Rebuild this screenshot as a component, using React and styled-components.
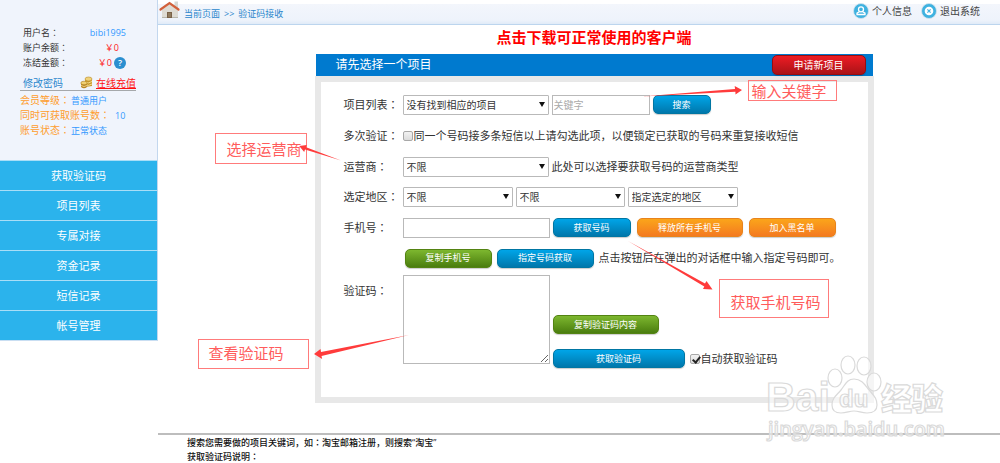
import React from "react";
import styled, { createGlobalStyle, css } from "styled-components";

const GlobalStyle = createGlobalStyle`
  * { box-sizing: border-box; }
  body { margin: 0; background: #fff; }
  body, button, input, select, textarea {
    font-family: "Open Sans", "Noto Sans CJK SC", sans-serif;
  }
`;

const Page = styled.div`
  display: flex;
  align-items: flex-start;
  min-height: 100vh;
  overflow-x: hidden;
  color: #333;
  font-size: 11px;
  line-height: 16px;
`;

/* full-width colon with its dots in the middle of the em box */
const CenteredColon = styled.span`
  font-family: "Noto Sans CJK JP", sans-serif;
  line-height: 0;
`;

/* ---------- sidebar ---------- */

const Sidebar = styled.aside`
  flex: none;
  width: 158px;
  border-right: 1px solid #c3d7ee;
  border-bottom: 1px solid #c9def2;
`;

const Profile = styled.section`
  min-height: 160px;
  padding: 25px 21px 0 20px;
  background: #f0f4fc;
  font-size: 9px;
  line-height: 15px;
`;

const ProfileRow = styled.div`
  display: flex;
  align-items: center;
  justify-content: space-between;
  height: 15px;
  padding: 0 ${(p) => p.$inset || 10}px 0 3px;
`;

const Value = styled.span`
  display: inline-flex;
  align-items: center;
  gap: 2px;
  color: ${(p) => (p.$money ? "#ff1a1a" : "#3399ff")};
`;

const Help = styled.button`
  width: 12px;
  height: 12px;
  padding: 0;
  border: 0;
  border-radius: 50%;
  background: #2b8fd0;
  color: #fff;
  font-size: 9px;
  font-weight: 600;
  line-height: 12px;
`;

const AccountLinks = styled.div`
  display: flex;
  align-items: flex-end;
  justify-content: space-between;
  height: 21px;
  padding-left: 3px;
  border-bottom: 1px solid #a5a8ab;
  font-size: 10px;
  line-height: 14px;
`;

const AccountLink = styled.a`
  color: ${(p) => (p.$pay ? "#f11" : "#2a86cc")};
  text-decoration: ${(p) => (p.$pay ? "underline" : "none")};
`;

const Recharge = styled.span`
  display: flex;
  align-items: flex-end;
  gap: 3px;
`;

const Status = styled.div`
  padding-top: 2px;
  color: #ff9d2e;
  font-size: 10px;
`;

const StatusValue = styled.span`
  padding-left: ${(p) => (p.$spaced ? 5 : 1)}px;
  color: #3399ff;
  font-size: 9px;
`;

const Nav = styled.nav`
  display: flex;
  flex-direction: column;
`;

const NavLink = styled.a`
  height: 30px;
  border-top: 1px solid #a9def7;
  background: #2bb3ec;
  color: #fff;
  line-height: 29px;
  text-align: center;
  text-decoration: none;
`;

/* ---------- main column ---------- */

const Main = styled.main`
  position: relative;
  flex: 1;
  min-width: 0;
`;

const TopBar = styled.header`
  display: flex;
  align-items: flex-start;
  height: 25px;
  border-bottom: 1px solid #bcd5ee;
  background: linear-gradient(#fff 4px, #f3f6fc 4px, #eef3fb 20px, #dde9f7 25px);
`;

const Crumbs = styled.nav`
  display: flex;
  gap: 4px;
  flex: 1;
  padding: 6px 0 0 3px;
  color: #2a86cc;
  font-size: 9px;
`;

const CrumbLink = styled.a`
  color: inherit;
  text-decoration: none;
`;

const UserLinks = styled.div`
  display: flex;
  gap: 9px;
  padding: 3px 20px 0 0;
`;

const UserLink = styled.a`
  display: flex;
  align-items: center;
  gap: 3px;
  color: #444;
  font-size: 10px;
  text-decoration: none;
`;

const Workspace = styled.div`
  padding: 0 0 30px 30px;
`;

const Download = styled.a`
  display: block;
  padding: 2px 0 7px;
  color: #f00;
  font-size: 15px;
  font-weight: 700;
  line-height: 20px;
  text-align: center;
  text-decoration: none;
`;

const Panel = styled.section`
  position: relative;
  width: 100%;
  max-width: 559px;
  margin: 0 auto;
`;

const PanelHead = styled.div`
  display: flex;
  align-items: center;
  justify-content: space-between;
  height: 22px;
  margin: 0 1px;
  padding: 0 7px 0 20px;
  background: #007acf;
`;

const PanelTitle = styled.h1`
  margin: 0;
  color: #fff;
  font-size: 12px;
  font-weight: 400;
`;

const Form = styled.form`
  min-height: 327px;
  padding: 7px 0 0 23px;
  border: 6px solid #e8e8e8;
`;

const Row = styled.div`
  display: flex;
  align-items: ${(p) => (p.$top ? "flex-start" : "center")};
  min-height: ${(p) => (p.$tight ? 30 : 31)}px;
  padding-top: ${(p) => (p.$top ? 2 : 0)}px;
`;

const Caption = styled.label`
  flex: none;
  width: 59px;
  padding-top: ${(p) => (p.$low ? 8 : 0)}px;
`;

const Controls = styled.div`
  display: flex;
  align-items: ${(p) => (p.$bottom ? "flex-end" : "center")};
  gap: 3px;
  padding-left: ${(p) => (p.$indent ? 2 : 0)}px;
  white-space: nowrap;
`;

const ButtonGroup = styled.div`
  display: flex;
  align-items: center;
  gap: ${(p) => (p.$close ? 5 : 6)}px;
`;

const ButtonStack = styled.div`
  display: flex;
  flex-direction: column;
  gap: 15px;
  margin-bottom: -4px;
`;

const tones = {
  blue: ["#00a5e8", "#0077ab", "#0076a3"],
  orange: ["#fba51a", "#f47a20", "#e8831c"],
  green: ["#7db72f", "#4a7d0e", "#538312"],
  red: ["#ed1c24", "#aa1317", "#980c10"],
};

const Button = styled.button`
  width: ${(p) => p.$width}px;
  height: ${(p) => (p.$tone === "red" ? 20 : 19)}px;
  padding: 0;
  border: 1px solid ${(p) => tones[p.$tone][2]};
  border-radius: 5px;
  background: linear-gradient(${(p) => tones[p.$tone][0]}, ${(p) => tones[p.$tone][1]});
  box-shadow: 0 1px 1px rgba(0, 0, 0, 0.2);
  color: #fff;
  font-size: ${(p) => (p.$tone === "red" ? 10 : 9)}px;
  line-height: 16px;
`;

const boxed = css`
  margin: 0;
  border: 1px solid #b9b9b9;
  border-radius: 0;
  background: #fff;
  color: #333;
  font-size: 10px;
`;

const SelectBox = styled.span`
  position: relative;
  width: ${(p) => p.$width}px;

  &::after {
    content: "";
    position: absolute;
    top: 7px;
    right: 4px;
    border: 3px solid transparent;
    border-top: 5px solid #111;
    border-bottom: 0;
    pointer-events: none;
  }
`;

const Select = styled.select`
  ${boxed}
  display: block;
  width: 100%;
  height: 20px;
  padding: 0 14px 0 3px;
  border-radius: 1px;
  appearance: none;
  line-height: 18px;
`;

const TextInput = styled.input`
  ${boxed}
  width: ${(p) => p.$width}px;
  height: 20px;
  padding: 0 1px;

  &::placeholder { color: #aaa; }
`;

const TextArea = styled.textarea`
  ${boxed}
  width: 147px;
  height: 89px;
  padding: 2px;
`;

const CheckLabel = styled.label`
  display: flex;
  align-items: center;
  gap: 1px;
`;

const Checkbox = styled.input`
  position: relative;
  width: 10px;
  height: 10px;
  margin: 0;
  border: 1px solid #a8a8a8;
  border-radius: 2px;
  appearance: none;
  background: linear-gradient(#f2f2f2, #dcdcdc);

  &:checked::after {
    content: "";
    position: absolute;
    left: 3px;
    top: 0;
    width: 3px;
    height: 6px;
    border: solid #222;
    border-width: 0 2px 2px 0;
    transform: rotate(40deg);
  }
`;

const AutoFetch = styled.div`
  display: flex;
  gap: 5px;
`;

/* ---------- callouts over the panel ---------- */

const Callout = styled.div`
  position: absolute;
  left: ${(p) => p.$x}px;
  top: ${(p) => p.$y}px;
  width: ${(p) => p.$w}px;
  height: ${(p) => p.$h}px;
  padding: ${(p) => p.$pad};
  border: 1px solid #ff7b7b;
  color: #ff5c5c;
  font-size: 15px;
  line-height: 20px;
  white-space: nowrap;
`;

const Arrows = styled.svg`
  position: absolute;
  left: -20px;
  top: 0;
  pointer-events: none;
`;

const Watermark = styled.svg`
  position: absolute;
  right: 50px;
  top: 350px;
  pointer-events: none;
`;

const Notes = styled.footer`
  padding: 1px 0 0 29px;
  border-top: 2px solid #bdbdbd;
  color: #111;
  font-size: 9px;
  font-weight: 500;
  line-height: 14px;
`;

const Note = styled.p`
  margin: 0;
`;

const HouseIcon = () => (
  <svg width="23" height="20" viewBox="0 0 23 20" aria-hidden="true">
    <path d="M16.500 1.500h3.500V9l-3.500-3z" fill="#d6d8d4" />
    <path d="M4 10 11.500 4 20 10v8H4z" fill="#dedbd3" />
    <path d="M4 17h16v1H4z" fill="#b7b5aa" />
    <path d="M2.500 9.500 11.500 3.200 20.500 9.500" fill="none" stroke="#d2603a" strokeWidth="2.200" strokeLinecap="round" />
    <path d="M9 18v-6h5v6z" fill="#7a6248" />
    <path d="M10 13h3v4h-3z" fill="#8f7a5e" />
  </svg>
);

const CoinsIcon = () => (
  <svg width="13" height="14" viewBox="0 0 13 14" aria-hidden="true">
    <path d="M5 3v8l7-1V3z" fill="#c99a2c" />
    <ellipse cx="8.500" cy="3" rx="3.500" ry="2" fill="#f0d27a" stroke="#b98a25" strokeWidth=".6" />
    <path d="M5 6q3.500 2 7-.5M5 8.500q3.500 2 7-.5" fill="none" stroke="#f3dc92" />
    <path d="M1 7v4q3 2.500 6 0V7z" fill="#b98422" />
    <ellipse cx="4" cy="7" rx="3.200" ry="1.800" fill="#f0cf70" stroke="#a97a1c" strokeWidth=".6" />
    <path d="M1 9.500q3 2 6 0" fill="none" stroke="#ecd084" />
  </svg>
);

const UserIcon = () => (
  <svg width="16" height="16" viewBox="0 0 16 16" aria-hidden="true">
    <circle cx="8" cy="8" r="7.500" fill="#3fb2e0" stroke="#d5e3ec" strokeWidth=".8" />
    <circle cx="8" cy="6.300" r="2.500" fill="none" stroke="#fff" strokeWidth="1.300" />
    <path d="M6.600 8.500 4 10.200v1.300h8v-1.300L9.400 8.500" fill="none" stroke="#fff" strokeWidth="1.300" />
  </svg>
);

const ExitIcon = () => (
  <svg width="16" height="16" viewBox="0 0 16 16" aria-hidden="true">
    <circle cx="8" cy="8" r="7.500" fill="#3fb2e0" stroke="#d5e3ec" strokeWidth=".8" />
    <circle cx="8" cy="8" r="4.300" fill="#fff" />
    <path d="m6.400 6.400 3.200 3.200m0-3.200L6.400 9.600" stroke="#3fb2e0" strokeWidth="1.200" />
  </svg>
);

const navItems = ["获取验证码", "项目列表", "专属对接", "资金记录", "短信记录", "帐号管理"];

const Colon = () => <CenteredColon lang="ja">：</CenteredColon>;

const Dropdown = ({ id, label, text, width }) => (
  <SelectBox $width={width}>
    <Select id={id} aria-label={label}>
      <option>{text}</option>
    </Select>
  </SelectBox>
);

const Action = ({ tone = "blue", width, children }) => (
  <Button type="button" $tone={tone} $width={width}>{children}</Button>
);

export default function App() {
  return (
    <Page>
      <GlobalStyle />
      <Sidebar>
        <Profile>
          <ProfileRow><span>用户名<Colon /></span><Value>bibi1995</Value></ProfileRow>
          <ProfileRow $inset={17}><span>账户余额<Colon /></span><Value $money>￥0</Value></ProfileRow>
          <ProfileRow>
            <span>冻结金额<Colon /></span>
            <Value $money>￥0<Help type="button">?</Help></Value>
          </ProfileRow>
          <AccountLinks>
            <AccountLink href="#password">修改密码</AccountLink>
            <Recharge><CoinsIcon /><AccountLink href="#recharge" $pay>在线充值</AccountLink></Recharge>
          </AccountLinks>
          <Status>
            <div>会员等级<Colon /><StatusValue>普通用户</StatusValue></div>
            <div>同时可获取账号数<Colon /><StatusValue $spaced>10</StatusValue></div>
            <div>账号状态<Colon /><StatusValue>正常状态</StatusValue></div>
          </Status>
        </Profile>
        <Nav>
          {navItems.map((item) => <NavLink href="#nav" key={item}>{item}</NavLink>)}
        </Nav>
      </Sidebar>

      <Main>
        <TopBar>
          <HouseIcon />
          <Crumbs>
            <CrumbLink href="#home">当前页面</CrumbLink>
            <span>&gt;&gt;</span>
            <CrumbLink href="#receive">验证码接收</CrumbLink>
          </Crumbs>
          <UserLinks>
            <UserLink href="#me"><UserIcon />个人信息</UserLink>
            <UserLink href="#exit"><ExitIcon />退出系统</UserLink>
          </UserLinks>
        </TopBar>

        <Workspace>
          <Download href="#client">点击下载可正常使用的客户端</Download>
          <Panel>
            <PanelHead>
              <PanelTitle>请先选择一个项目</PanelTitle>
              <Action tone="red" width={94}>申请新项目</Action>
            </PanelHead>
            <Form>
              <Row>
                <Caption htmlFor="project">项目列表<Colon /></Caption>
                <Controls>
                  <Dropdown id="project" text="没有找到相应的项目" width={146} />
                  <TextInput $width={98} placeholder="关键字" aria-label="关键字" />
                  <Action width={58}>搜索</Action>
                </Controls>
              </Row>
              <Row>
                <Caption htmlFor="repeat">多次验证<Colon /></Caption>
                <CheckLabel>
                  <Checkbox id="repeat" type="checkbox" />
                  同一个号码接多条短信以上请勾选此项，以便锁定已获取的号码来重复接收短信
                </CheckLabel>
              </Row>
              <Row>
                <Caption htmlFor="carrier">运营商<Colon /></Caption>
                <Controls>
                  <Dropdown id="carrier" text="不限" width={146} />
                  <span>此处可以选择要获取号码的运营商类型</span>
                </Controls>
              </Row>
              <Row $tight>
                <Caption htmlFor="province">选定地区<Colon /></Caption>
                <Controls>
                  <Dropdown id="province" text="不限" width={110} />
                  <Dropdown label="城市" text="不限" width={109} />
                  <Dropdown label="地区方式" text="指定选定的地区" width={110} />
                </Controls>
              </Row>
              <Row>
                <Caption htmlFor="phone">手机号<Colon /></Caption>
                <Controls>
                  <TextInput id="phone" $width={147} />
                  <ButtonGroup>
                    <Action width={78}>获取号码</Action>
                    <Action tone="orange" width={106}>释放所有手机号</Action>
                    <Action tone="orange" width={87}>加入黑名单</Action>
                  </ButtonGroup>
                </Controls>
              </Row>
              <Row $tight>
                <Caption as="span" />
                <Controls $indent>
                  <ButtonGroup $close>
                    <Action tone="green" width={87}>复制手机号</Action>
                    <Action width={97}>指定号码获取</Action>
                    <span>点击按钮后在弹出的对话框中输入指定号码即可。</span>
                  </ButtonGroup>
                </Controls>
              </Row>
              <Row $top>
                <Caption htmlFor="code" $low>验证码<Colon /></Caption>
                <Controls $bottom>
                  <TextArea id="code" />
                  <ButtonStack>
                    <Action tone="green" width={106}>复制验证码内容</Action>
                    <AutoFetch>
                      <Action width={132}>获取验证码</Action>
                      <CheckLabel>
                        <Checkbox type="checkbox" defaultChecked />
                        自动获取验证码
                      </CheckLabel>
                    </AutoFetch>
                  </ButtonStack>
                </Controls>
              </Row>
            </Form>

            <Callout $x={433} $y={26} $w={89} $h={21} $pad="0 3px">输入关键字</Callout>
            <Callout $x={-100} $y={79} $w={92} $h={31} $pad="5px 11px">选择运营商</Callout>
            <Callout $x={404} $y={225} $w={110} $h={39} $pad="12px 11px">获取手机号码</Callout>
            <Callout $x={-117} $y={285} $w={111} $h={30} $pad="3px 10px">查看验证码</Callout>
            <Arrows width="579" height="340" viewBox="-20 0 579 340" aria-hidden="true">
              <g fill="#ff3b3b">
                <path d="M327 42.500 420 35l-.3-3 7.300 4-6.500 4.500-.1-2.700z" />
                <path d="M26 106.500-10 95.500l-.8 2.500-5-6 7.500-1-.6 2.300z" />
                <path d="m313 187 77 42.500 1.500-2.500 6 8.500-9.500-.5 1.300-2.500z" />
                <path d="M94 281 6.500 302l.7 3L-1 300l6.500-5 .5 3z" />
              </g>
            </Arrows>
          </Panel>
        </Workspace>

        <Notes>
          <Note>搜索您需要做的项目关键词，如<Colon />淘宝邮箱注册，则搜索“淘宝”</Note>
          <Note>获取验证码说明<Colon /></Note>
        </Notes>

        <Watermark width="190" height="98" viewBox="0 0 190 98" aria-hidden="true">
          <g fill="#fff" fillOpacity=".55" stroke="#dadada" strokeWidth="1.200" fontFamily="Liberation Sans, Noto Sans CJK SC, sans-serif" fontWeight="700">
            <text x="6" y="61" fontSize="41">Bai</text>
            <ellipse cx="75" cy="28" rx="7" ry="9" />
            <ellipse cx="88" cy="15" rx="7" ry="9" />
            <ellipse cx="104" cy="16" rx="7" ry="9" />
            <ellipse cx="114" cy="32" rx="7" ry="9" />
            <path d="M94 29c8 0 11 6 15 11 5 6 8 8 8 15 0 6-5 8-10 8-6 0-8-2-13-2s-7 2-13 2c-6 0-9-3-9-8 0-7 4-9 9-15 4-5 6-11 13-11z" />
            <text x="79" y="57" fontSize="24">du</text>
            <text x="121" y="60" fontSize="31" fontWeight="900">经验</text>
            <text x="8" y="86" fontSize="20" fontFamily="Open Sans, sans-serif" fontWeight="600">jingyan.baidu.com</text>
          </g>
        </Watermark>
      </Main>
    </Page>
  );
}
